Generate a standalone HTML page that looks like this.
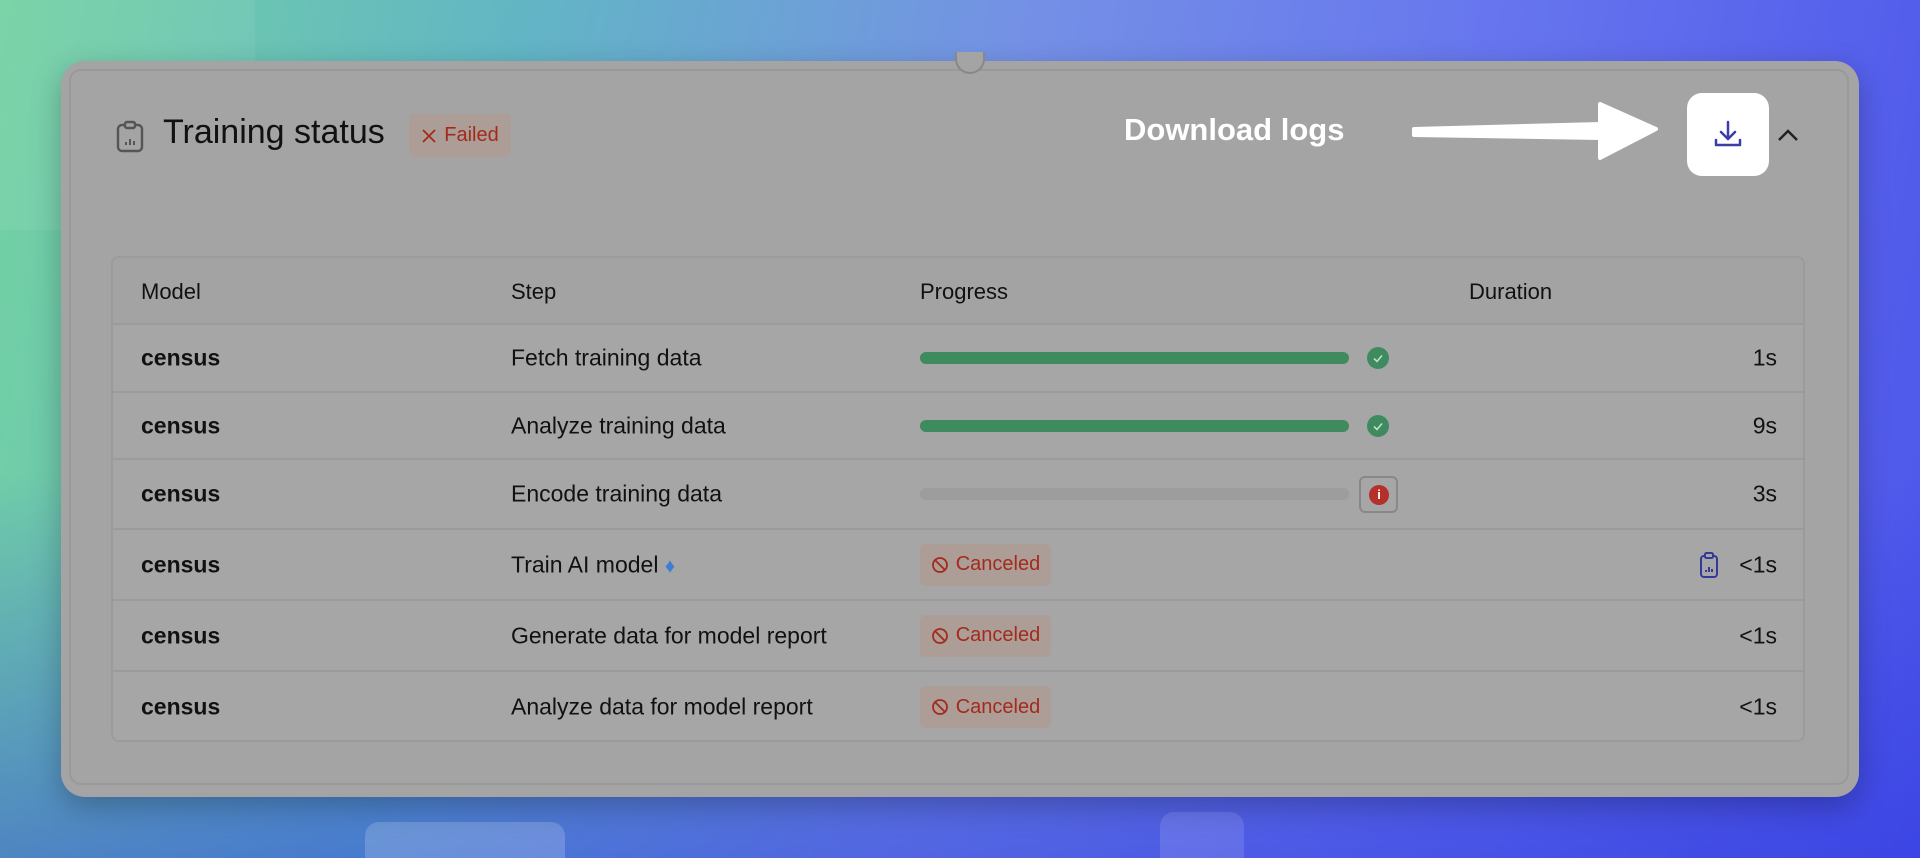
<!DOCTYPE html>
<html style="background:#4a55e0"><head><meta charset="utf-8"><style>
*{margin:0;padding:0;box-sizing:border-box}
html,body{width:1920px;height:858px;overflow:hidden}
body{position:relative;font-family:"Liberation Sans",sans-serif;
background:linear-gradient(100deg,#73d2a2 0%,#62b6c4 25%,#7490e6 50%,#6776ee 72%,#4c55ea 100%);}
.bl{position:absolute;inset:0;background:linear-gradient(180deg,rgba(0,0,0,0) 55%,rgba(40,50,220,.45) 100%)}
.card{position:absolute;left:61px;top:61px;width:1798px;height:736px;background:#a4a4a4;border-radius:24px;box-shadow:0 10px 30px rgba(0,0,0,.25)}
.inner{position:absolute;left:8px;top:8px;right:10px;bottom:12px;border:2px solid #999;border-radius:12px}
.abs{position:absolute}
.title{left:163px;top:113px;font-size:34px;color:#111}
.badge{background:#ad9d97;border-radius:5px;color:#a42a1c;font-size:20px;display:flex;align-items:center;justify-content:center;gap:7px;white-space:nowrap}
.dl{left:1124px;top:112px;font-size:31px;font-weight:bold;color:#fff}
.btn{left:1687px;top:93px;width:82px;height:83px;background:#fff;border-radius:15px}
.table{left:111px;top:256px;width:1694px;height:486px;border:2px solid #9b9b9b;border-radius:8px;background:#a6a6a6;overflow:hidden}
.row{position:absolute;left:0;right:0;border-top:2px solid #9b9b9b;font-size:23px;color:#111}
.row>span{position:absolute;top:50%;transform:translateY(-50%)}
.c1{left:28px;font-weight:bold}.c2{left:398px}.c4{right:26px}
.bar{position:absolute;left:807px;width:429px;height:12px;border-radius:6px;top:50%;margin-top:-6px}
.chk{position:absolute;left:1254px;top:50%;margin-top:-11px;width:22px;height:22px;border-radius:50%;background:#3f8a5e}
.cb{left:807px !important;height:42px;width:131px}
</style></head><body>
<div class="bl"></div>
<div class="abs" style="left:0;top:0;width:255px;height:230px;background:rgba(255,255,255,.06)"></div>
<div class="abs" style="left:365px;top:822px;width:200px;height:60px;border-radius:14px;background:rgba(255,255,255,.18)"></div>
<div class="abs" style="left:1160px;top:812px;width:84px;height:60px;border-radius:14px;background:rgba(255,255,255,.12)"></div>
<div class="card"><div class="inner"></div></div>
<svg class="abs" style="left:116px;top:120px" width="28" height="33" viewBox="0 0 28 33" fill="none" stroke="#555" stroke-width="2.4"><rect x="2" y="5" width="24" height="26" rx="4"/><rect x="9" y="2" width="10" height="6" rx="2" fill="#a4a4a4"/><path d="M10 25v-3M14 25v-6M18 25v-4" stroke-width="2"/></svg>
<div class="abs title">Training status</div>
<div class="abs badge" style="left:409px;top:114px;height:43px;width:102px"><svg width="16" height="16" viewBox="0 0 16 16" stroke="#a42a1c" stroke-width="1.8"><path d="M2 2l12 12M14 2L2 14"/></svg>Failed</div>
<div class="abs dl">Download logs</div>
<svg class="abs" style="left:1410px;top:100px" width="252" height="62" viewBox="0 0 252 62"><path d="M4 29 L190 24 L190 4 L246 29 L190 58 L190 38 L4 35 Z" fill="#fff" stroke="#fff" stroke-width="4" stroke-linejoin="round"/></svg>
<div class="abs btn"><svg style="position:absolute;left:26px;top:26px" width="30" height="30" viewBox="0 0 30 30" fill="none" stroke="#3a3fa8" stroke-width="2.5" stroke-linecap="round" stroke-linejoin="round"><path d="M15 3v17M8 13l7 7 7-7M3 21v5h24v-5"/></svg></div>
<svg class="abs" style="left:1776px;top:127px" width="24" height="16" viewBox="0 0 24 16" fill="none" stroke="#222" stroke-width="2.5"><path d="M3 13L12 4l9 9"/></svg>
<div class="abs table">
<div class="row" style="top:0;height:67px;border-top:none;background:#a3a3a3;font-size:22px"><span style="left:28px">Model</span><span class="c2">Step</span><span style="left:807px">Progress</span><span style="left:1356px">Duration</span></div>
<div class="row" style="top:65px;height:68px"><span class="c1">census</span><span class="c2">Fetch training data</span><div class="bar" style="background:#3f8a5e"></div><div class="chk"><svg width="22" height="22" viewBox="0 0 22 22" fill="none" stroke="#bfe0cc" stroke-width="1.6"><path d="M7 11.5l3 3 5-6"/></svg></div><span class="c4">1s</span></div>
<div class="row" style="top:133px;height:67px"><span class="c1">census</span><span class="c2">Analyze training data</span><div class="bar" style="background:#3f8a5e"></div><div class="chk"><svg width="22" height="22" viewBox="0 0 22 22" fill="none" stroke="#bfe0cc" stroke-width="1.6"><path d="M7 11.5l3 3 5-6"/></svg></div><span class="c4">9s</span></div>
<div class="row" style="top:200px;height:70px"><span class="c1">census</span><span class="c2">Encode training data</span><div class="bar" style="background:#9d9d9d"></div><div style="position:absolute;left:1246px;top:16px;width:39px;height:37px;border:2px solid #888;border-radius:6px"><div style="position:absolute;left:8px;top:7px;width:20px;height:20px;border-radius:50%;background:#b5302a;color:#fff;font-size:13px;font-weight:bold;text-align:center;line-height:20px">i</div></div><span class="c4">3s</span></div>
<div class="row" style="top:270px;height:71px"><span class="c1">census</span><span class="c2">Train AI model <span style="color:#3c7fd0;font-size:20px">♦</span></span><span class="badge cb"><svg width="18" height="18" viewBox="0 0 18 18" fill="none" stroke="#a42a1c" stroke-width="1.8"><circle cx="9" cy="9" r="7"/><path d="M4 4l10 10"/></svg>Canceled</span><svg style="position:absolute;left:1586px;top:22px" width="20" height="27" viewBox="0 0 20 27" fill="none" stroke="#33389a" stroke-width="2"><rect x="2" y="4" width="16" height="21" rx="3"/><rect x="6" y="1" width="8" height="5" rx="1.5" fill="#a6a6a6"/><path d="M7 20v-2M10 20v-5M13 20v-3"/></svg><span class="c4">&lt;1s</span></div>
<div class="row" style="top:341px;height:71px"><span class="c1">census</span><span class="c2">Generate data for model report</span><span class="badge cb"><svg width="18" height="18" viewBox="0 0 18 18" fill="none" stroke="#a42a1c" stroke-width="1.8"><circle cx="9" cy="9" r="7"/><path d="M4 4l10 10"/></svg>Canceled</span><span class="c4">&lt;1s</span></div>
<div class="row" style="top:412px;height:72px"><span class="c1">census</span><span class="c2">Analyze data for model report</span><span class="badge cb"><svg width="18" height="18" viewBox="0 0 18 18" fill="none" stroke="#a42a1c" stroke-width="1.8"><circle cx="9" cy="9" r="7"/><path d="M4 4l10 10"/></svg>Canceled</span><span class="c4">&lt;1s</span></div>
</div>
<div class="abs" style="left:955px;top:52px;width:30px;height:22px;border-radius:0 0 15px 15px;border:2px solid #888;border-top:none;background:#a4a4a4"></div>
</body></html>
